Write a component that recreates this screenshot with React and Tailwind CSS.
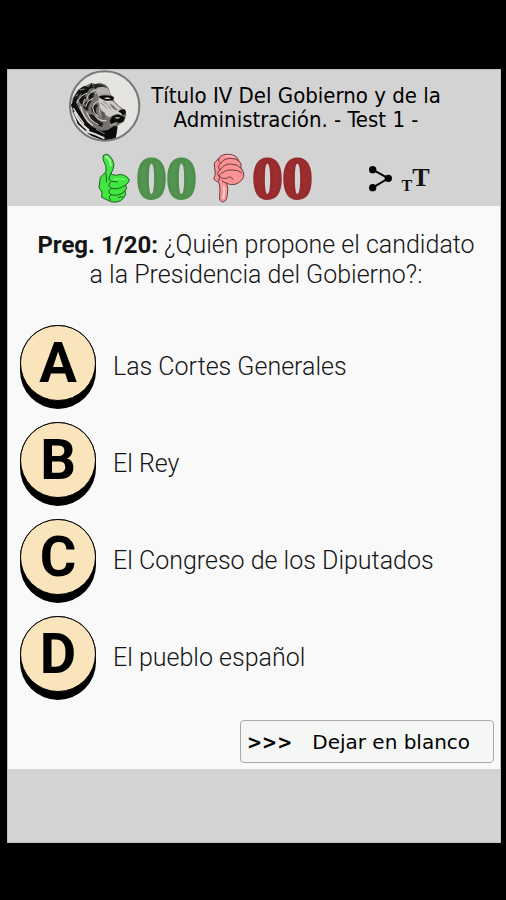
import React, { useState } from 'react';

const answers = [
  { id: 'A', text: 'Las Cortes Generales' },
  { id: 'B', text: 'El Rey' },
  { id: 'C', text: 'El Congreso de los Diputados' },
  { id: 'D', text: 'El pueblo español' },
];

const LionLogo = () => (
  <svg viewBox="24 18 216 216" className="h-[72px] w-[72px] shrink-0" aria-hidden="true">
    <defs>
      <clipPath id="medal">
        <circle cx="131" cy="126" r="103" />
      </clipPath>
    </defs>
    <circle cx="131" cy="126" r="104" fill="#e6e4e1" />
    <g clipPath="url(#medal)">
      {/* melena */}
      <path d="M92 56 L104 60 L118 56 L134 62 L143 72 L147 88 L154 97 L160 112 L174 126 L192 138 L196 152 L190 172 L177 180 L166 190 L168 204 L162 222 L120 226 L84 212 L52 180 L34 144 L34 104 L50 78 L64 68 L76 64 Z" fill="#77736f" />
      <path d="M70 66 Q50 76 38 102 L30 130 L44 122 Q48 98 62 88 L58 104 L74 94 L86 74 L98 72 L92 58 L82 70 Z" fill="#111" />
      <path d="M96 62 Q116 54 138 70 L128 74 L112 68 L102 76 Z" fill="#222" />
      <path d="M30 120 L46 116 L56 138 L66 152 L76 172 L96 190 L122 200 L140 198 L160 186 L170 188 L164 224 L130 230 L92 216 L50 180 Z" fill="#0b0b0b" />
      <path d="M52 102 Q68 92 78 100 Q66 108 64 122 Q54 118 52 102 Z M84 86 Q96 84 104 92 Q92 100 88 112 Q78 100 84 86 Z" fill="#161616" />
      <path d="M66 126 Q72 108 92 112 Q80 124 82 140 Q70 140 66 126 Z M90 134 Q96 118 112 122 Q100 136 108 150 Q94 150 90 134 Z M84 152 Q92 148 102 158 Q112 172 126 176 L124 188 Q98 184 84 152 Z" fill="#1c1c1c" />
      {/* cara */}
      <path d="M104 76 Q122 62 141 74 L148 94 Q124 88 112 98 Z" fill="#b3afaa" />
      <path d="M112 102 Q128 108 144 106 L158 114 L174 130 L190 140 L182 154 L164 150 L144 160 L130 150 L116 130 Z" fill="#cfccc8" />
      <path d="M114 97 Q132 92 158 98 Q161 103 155 109 L142 110 Q126 112 114 97 Z" fill="#080808" />
      <path d="M128 102 Q140 98 150 103 Q140 108 128 102 Z" fill="#eee" />
      <path d="M146 118 Q157 122 166 134 L174 137 L164 139 Q151 133 146 118 Z" fill="#77736e" />
      <path d="M177 137 L190 136 Q197 142 193 151 L184 153 Q181 146 172 143 Z" fill="#090909" />
      <path d="M154 157 L172 151 L185 157 L192 160 L186 174 L174 177 L164 173 L151 181 L146 170 Z" fill="#0a0a0a" />
      <path d="M160 161 Q170 157 179 161 L168 165 Z" fill="#aaa69f" />
      <path d="M124 142 Q136 146 132 162 Q128 168 122 160 Q117 148 124 142 Z" fill="#5c5855" />
      <path d="M118 116 Q130 122 138 134 M126 112 Q140 118 150 136" fill="none" stroke="#8a8682" strokeWidth="3" />
      {/* mechones claros */}
      <g fill="none" stroke="#dedbd7" strokeLinecap="round">
        <path d="M42 146 Q52 176 82 198" strokeWidth="7" />
        <path d="M38 134 Q52 158 68 178" strokeWidth="4" />
        <path d="M59 128 Q66 162 94 184" strokeWidth="4" />
        <path d="M76 202 Q102 209 128 222" strokeWidth="6" />
        <path d="M78 88 Q58 92 48 116 M104 78 Q84 82 78 103" strokeWidth="3" />
        <path d="M94 104 Q80 108 74 127 M113 112 Q98 114 95 132 Q96 148 112 158" strokeWidth="3" />
        <path d="M118 78 Q105 83 99 95 M70 106 Q64 117 70 126" strokeWidth="2" />
        <path d="M78 146 Q84 168 112 182 M104 158 Q115 172 135 170" strokeWidth="3" />
        <path d="M116 134 Q111 145 121 156 M148 184 Q158 178 163 180" strokeWidth="2" />
        <path d="M58 78 L70 75 M44 96 L51 91 M106 196 L130 209" strokeWidth="2" />
      </g>
    </g>
    <circle cx="131" cy="126" r="104" fill="none" stroke="#747a7a" strokeWidth="6" />
  </svg>
);

const ThumbUp = () => (
  <svg viewBox="27 18 96 150" className="h-[50px] w-8 shrink-0" role="img" aria-label="Aciertos">
    <g fill="#3fe83f" stroke="#245c24" strokeWidth="3" strokeLinejoin="round" strokeLinecap="round">
      <path d="M43 26 Q49 18 59 24 Q73 36 75 53 Q73 68 66 80 Q76 88 94 82 Q115 86 121 99 Q119 108 110 114 Q116 124 108 132 Q114 143 105 151 Q98 164 82 165 Q65 167 57 160 L38 151 L39 135 L30 122 L34 91 Q41 83 51 75 Q54 56 44 42 Q40 34 43 26 Z" />
      <path fill="none" d="M51 80 L53 105 M66 80 Q53 98 67 103 L85 105 M65 105 Q52 116 68 124 Q87 130 110 114 M68 124 Q51 132 66 143 Q91 150 108 132 M66 143 Q54 152 66 160 M88 151 Q97 148 104 151" />
    </g>
    <path d="M51 29 Q64 36 65 55" fill="none" stroke="#a5ffa5" strokeWidth="6" strokeLinecap="round" />
    <path d="M75 97 Q91 94 107 98" fill="none" stroke="#83fb75" strokeWidth="4" strokeLinecap="round" />
  </svg>
);

const ThumbDown = () => (
  <svg viewBox="42 18 102 150" className="h-[50px] w-[34px] shrink-0" role="img" aria-label="Fallos">
    <g fill="#fa9296" stroke="#703c40" strokeWidth="3" strokeLinejoin="round" strokeLinecap="round">
      <path d="M64 31 Q74 20 94 22 Q117 25 121 39 Q133 51 129 63 Q140 76 137 88 Q132 105 111 112 Q97 115 86 109 Q92 124 88 143 Q86 164 74 165 Q63 163 65 150 Q67 130 64 109 L47 96 L52 82 L49 50 Z" />
      <path fill="none" d="M64 33 Q58 45 69 49 Q77 35 98 34 Q113 34 121 41 M69 49 Q56 56 66 69 Q78 50 100 51 Q117 51 129 63 M66 69 Q54 76 62 87 Q79 67 102 69 Q121 68 131 77 M62 87 Q72 98 86 94 L95 89 L105 96 M65 88 L62 103 M86 109 Q77 107 72 101" />
    </g>
    <path d="M77 119 Q81 136 76 153" fill="none" stroke="#ffd0d0" strokeWidth="6" strokeLinecap="round" />
    <path d="M83 28 Q96 25 108 31" fill="none" stroke="#ffb9b9" strokeWidth="4" strokeLinecap="round" />
  </svg>
);

const ShareIcon = () => (
  <svg viewBox="50 33 75 81" className="h-[27px] w-[25px]" aria-hidden="true">
    <path d="M64 47 L111 73 L64 101" fill="none" stroke="#050505" strokeWidth="6" />
    <circle cx="64" cy="47" r="11" />
    <circle cx="111" cy="73" r="11" />
    <circle cx="64" cy="101" r="11" />
  </svg>
);

const Header = () => (
  <header className="bg-[#d3d3d3]">
    <div className="flex items-center justify-center pl-3">
      <LionLogo />
      <h1 className="w-[310px] pt-1 text-center font-['DejaVu_Sans_Condensed','DejaVu_Sans',sans-serif] text-[22px] font-normal leading-6 text-black">
        Título IV Del Gobierno y de la
        <br />
        Administración. - Test 1 -
      </h1>
    </div>
    <div className="flex h-16 items-center justify-center pl-5 pt-2">
      <ThumbUp />
      <span className="ml-1.5 w-[60px] text-center font-['Liberation_Serif',serif] text-[60px] font-bold leading-[50px] text-[#529450] [-webkit-text-stroke:3px_#4f8f4d]">00</span>
      <div className="ml-4 flex">
        <ThumbDown />
      </div>
      <span className="ml-1.5 w-[60px] text-center font-['Liberation_Serif',serif] text-[60px] font-bold leading-[50px] text-[#9c2d2e] [-webkit-text-stroke:3px_#962c2d]">00</span>
      <button type="button" aria-label="Compartir" className="ml-14">
        <ShareIcon />
      </button>
      <button type="button" aria-label="Tamaño del texto" className="ml-2 flex items-end pt-1 font-['Liberation_Serif',serif] font-bold text-[#151515]">
        <span className="text-base leading-4">T</span>
        <span className="pb-1 text-[26px] leading-6">T</span>
      </button>
    </div>
  </header>
);

const App = () => {
  const [selected, setSelected] = useState(null);

  return (
    <div className="min-h-screen bg-black py-[69px] pl-[7px] pr-[5px] font-['Roboto',sans-serif] text-[#151515]">
      <div className="border border-[#bdbdbd] bg-[#f9f9f9]">
        <Header />
        <main className="px-3 pb-1.5 pt-6">
          <h2 className="pl-1 text-center text-[25px] font-light leading-[29px]">
            <b className="text-2xl font-bold leading-[29px]">Preg. 1/20:</b> ¿Quién propone el candidato
            <br />
            a la Presidencia del Gobierno?:
          </h2>
          <ul className="mt-9 flex flex-col gap-[13px]">
            {answers.map((answer) => (
              <li key={answer.id}>
                <button
                  type="button"
                  aria-pressed={selected === answer.id}
                  onClick={() => setSelected(answer.id)}
                  className="flex w-full items-center gap-[17px] text-left text-[25px] font-light"
                >
                  <span className="h-[84px] w-[76px] shrink-0 rounded-[38px] bg-black">
                    <span className="flex h-[76px] items-center justify-center rounded-full border border-black bg-[#fae4bc] font-['Roboto',sans-serif] text-[56px] font-bold text-black">
                      {answer.id}
                    </span>
                  </span>
                  <span>{answer.text}</span>
                </button>
              </li>
            ))}
          </ul>
          <div className="-mr-1.5 mt-5 flex justify-end">
            <button
              type="button"
              onClick={() => setSelected(null)}
              className="flex h-[43px] w-[254px] items-center gap-5 whitespace-nowrap rounded-[4px] border border-[#aaa] bg-[#f5f7f4] px-1.5 font-['DejaVu_Sans',sans-serif] text-xl text-black"
            >
              <b className="font-['DejaVu_Sans_Condensed','DejaVu_Sans',sans-serif]">&gt;&gt;&gt;</b>
              <span>Dejar en blanco</span>
            </button>
          </div>
        </main>
        <footer className="h-[73px] bg-[#d3d3d3]" />
      </div>
    </div>
  );
};

export default App;
